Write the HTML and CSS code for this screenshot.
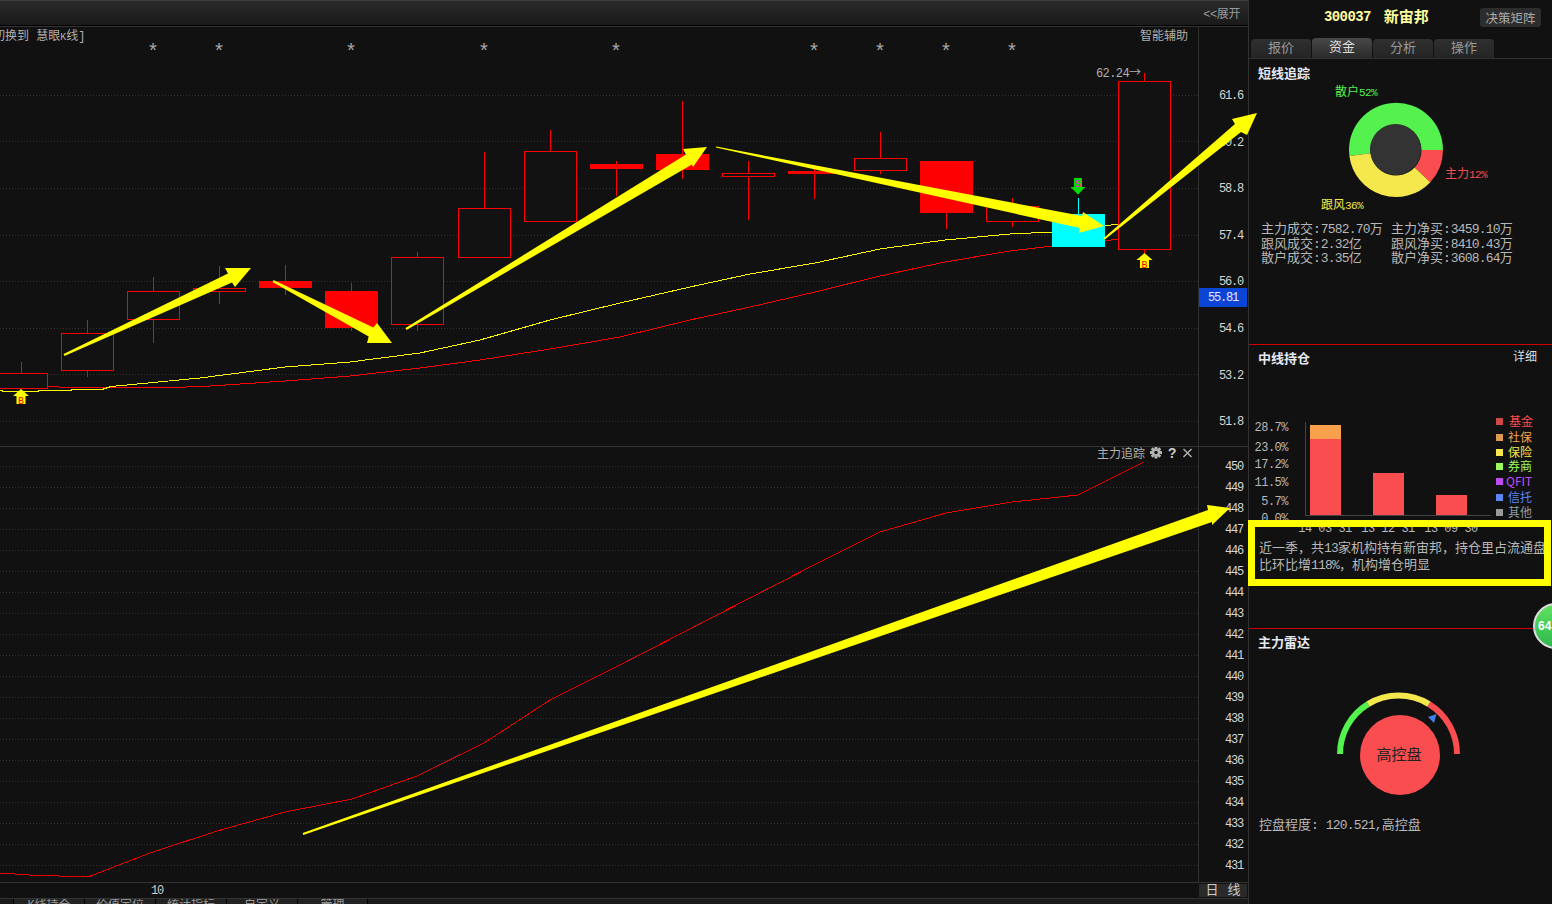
FILE: index.html
```html
<!DOCTYPE html>
<html lang="zh">
<head>
<meta charset="utf-8">
<title>新宙邦 300037</title>
<link rel="stylesheet" href="styles.css">
</head>
<body>
<div class="app">
  <div class="main">
    <div class="topbar"><span class="expand">&lt;&lt;展开</span></div>

    <div class="pane pane-k">
      <svg class="chart" viewBox="0 26 1199 420" width="1199" height="420">
        <g class="grid">
          <path d="M0 95H1199M0 141H1199M0 188H1199M0 235H1199M0 281H1199M0 328H1199M0 374H1199M0 421H1199"/>
        </g>
        <text class="t" x="-7" y="40">切换到 慧眼<tspan class="small-k">K</tspan>线]</text>
        <text class="t" x="1140" y="40">智能辅助</text>
        <g class="t stars" text-anchor="middle">
          <text x="153" y="58">*</text><text x="219" y="58">*</text><text x="351" y="58">*</text>
          <text x="484" y="58">*</text><text x="616" y="58">*</text><text x="814" y="58">*</text>
          <text x="880" y="58">*</text><text x="946" y="58">*</text><text x="1012" y="58">*</text>
        </g>
        <text class="t num-t" x="1096" y="77">62.24<tspan class="arrow-glyph">→</tspan></text>

        <polyline class="ma-r" points="47,386.500 70,387.500 170,387.500 203,386.500 285,381 350,376 420,368 480,360 550,349 620,337 690,320 750,307 815,292 880,276 945,262 1010,251 1052,246 1105,241 1118,239"/>
        <polyline class="ma-y" points="0,390.500 5,391.500 38,391.500 38,390.500 71,390.500 71,389.500 102,389.500 111,386.500 200,378 285,367 350,362 420,353 480,340 550,320 620,303 690,287 750,274 815,263 880,249 945,240 1010,234 1052,232 1105,226 1118,224"/>

        <g class="wick">
          <path d="M21.5 362V373M87.5 320V377M153.5 277V343M219.5 266V304M285.5 265V295M351.5 283V331M417.5 252V331M484.5 152V208M550.5 130V151M616.5 161V196M682.5 101V179M748.5 161V220M814.5 165V199M880.5 132V174M946.5 213V229M1012.5 198V227M1144.5 73V81M1144.5 249V253"/>
        </g>
        <g class="up">
          <rect x="-5" y="373.5" width="52" height="15"/>
          <rect x="61.5" y="333.5" width="52" height="37"/>
          <rect x="127.5" y="291.5" width="52" height="28"/>
          <rect x="193.5" y="288.5" width="52" height="3"/>
          <rect x="391.5" y="257.5" width="52" height="67"/>
          <rect x="458.5" y="208.5" width="52" height="49"/>
          <rect x="524.5" y="151.5" width="52" height="70"/>
          <rect x="722.5" y="173.5" width="52" height="3"/>
          <rect x="854.5" y="158.5" width="52" height="12"/>
          <rect x="986.5" y="206.5" width="52" height="15"/>
          <rect x="1118.5" y="81.5" width="52" height="168"/>
        </g>
        <g class="down">
          <rect x="259" y="281" width="53" height="7"/>
          <rect x="325" y="291" width="53" height="37"/>
          <rect x="590" y="164" width="53" height="5"/>
          <rect x="656" y="154" width="53" height="16"/>
          <rect x="788" y="171" width="53" height="3"/>
          <rect x="920" y="161" width="53" height="52"/>
        </g>
        <path class="cyan-wick" d="M1078.5 198V214"/>
        <rect class="cyan" x="1052" y="214" width="53" height="33"/>

        <g class="mark-b">
          <polygon points="21,389 29,396 25.5,396 25.5,404 16.5,404 16.5,396 13,396"/>
          <text x="21" y="404">B</text>
          <polygon points="1144.5,253 1152.5,260 1149,260 1149,268 1140,268 1140,260 1136.5,260"/>
          <text x="1144.5" y="268">B</text>
        </g>
        <g class="mark-s">
          <polygon points="1074,178 1082,178 1082,187 1085.5,187 1078,194.500 1070.500,187 1074,187"/>
          <text x="1078" y="187">S</text>
        </g>
      </svg>
      <div class="axis axis-k">
        <span>61.6</span><span>60.2</span><span>58.8</span><span>57.4</span>
        <span>56.0</span><span>54.6</span><span>53.2</span><span>51.8</span>
      </div>
      <span class="price-tag">55.81</span>
    </div>

    <div class="pane pane-i">
      <svg class="chart" viewBox="0 447 1199 435" width="1199" height="435">
        <g class="grid">
          <path d="M0 466H1199M0 487H1199M0 508H1199M0 529H1199M0 550H1199M0 571H1199M0 592H1199M0 613H1199M0 634H1199M0 655H1199M0 676H1199M0 697H1199M0 718H1199M0 739H1199M0 760H1199M0 781H1199M0 802H1199M0 823H1199M0 844H1199M0 865H1199"/>
        </g>
        <polyline class="ind" points="0,873 30,875 88,877 150,853 217,831 285,812 352,799 417,776 484,743 550,700 616,667 682,633 748,599 814,565 880,532 946,513 1012,502 1078,495 1144,462"/>
        <text class="t" x="1097" y="458">主力追踪</text>
        <g class="gear" transform="translate(1156 452.500)">
          <circle r="3.600"/>
          <path d="M-1.500 -6H1.500V6H-1.500ZM-6 -1.500V1.500H6V-1.500ZM-5.300 -3.200L-3.200 -5.300L5.300 3.200L3.200 5.300ZM5.300 -3.200L3.200 -5.300L-5.300 3.200L-3.200 5.300Z"/>
          <circle class="gear-hole" r="1.700"/>
        </g>
        <text class="t ctl" x="1168" y="458">?</text>
        <path class="close" d="M1183.500 449L1191.500 457M1191.500 449L1183.500 457"/>
      </svg>
      <div class="axis axis-i">
        <span>450</span><span>449</span><span>448</span><span>447</span><span>446</span>
        <span>445</span><span>444</span><span>443</span><span>442</span><span>441</span>
        <span>440</span><span>439</span><span>438</span><span>437</span><span>436</span>
        <span>435</span><span>434</span><span>433</span><span>432</span><span>431</span>
      </div>
    </div>

    <div class="daterow">
      <span class="date">10</span>
      <span class="period">日 线</span>
    </div>
    <div class="btabs">
      <span>K线持仓</span><span>价值定位</span><span>统计指标</span><span>自定义</span><span>管理</span>
    </div>
  </div>

  <aside class="side">
    <div class="stock">
      <div class="stock-name"><span class="code">300037</span><span>新宙邦</span></div>
      <span class="matrix">决策矩阵</span>
    </div>
    <div class="stabs">
      <span class="stab">报价</span><span class="stab active">资金</span><span class="stab">分析</span><span class="stab">操作</span>
    </div>

    <section class="sec sec-short">
      <h3 class="sec-title">短线追踪</h3>
      <svg class="donut" viewBox="1249 83 303 132" width="303" height="132">
        <path class="c-green" d="M1443 150A47 47 0 1 0 1349.400 155.900L1370.700 153.200A25.500 25.500 0 1 1 1421.500 150Z"/>
        <path class="c-red" d="M1443 150A47 47 0 0 1 1430.300 182.200L1414.600 167.500A25.500 25.500 0 0 0 1421.500 150Z"/>
        <path class="c-yellow" d="M1430.300 182.200A47 47 0 0 1 1349.400 155.900L1370.700 153.200A25.500 25.500 0 0 0 1414.600 167.500Z"/>
        <circle class="c-hole" cx="1395.500" cy="149.500" r="25.500"/>
        <text class="lab l-green" x="1335" y="96">散户<tspan class="lab-n">52%</tspan></text>
        <text class="lab l-red" x="1445" y="178">主力<tspan class="lab-n">12%</tspan></text>
        <text class="lab l-yellow" x="1321" y="209">跟风<tspan class="lab-n">36%</tspan></text>
      </svg>
      <div class="flows">
        <div>主力成交:<span class="n">7582.70</span>万</div><div>主力净买:<span class="n">3459.10</span>万</div>
        <div>跟风成交:<span class="n">2.32</span>亿</div><div>跟风净买:<span class="n">8410.43</span>万</div>
        <div>散户成交:<span class="n">3.35</span>亿</div><div>散户净买:<span class="n">3608.64</span>万</div>
      </div>
    </section>

    <section class="sec sec-mid">
      <div class="sec-head">
        <h3 class="sec-title">中线持仓</h3>
        <span class="detail">详细</span>
      </div>
      <svg class="bars" viewBox="1249 415 303 118" width="303" height="118">
        <g class="ylab" text-anchor="end">
          <text x="1288" y="431">28.7%</text><text x="1288" y="451">23.0%</text><text x="1288" y="468">17.2%</text>
          <text x="1288" y="486">11.5%</text><text x="1288" y="505">5.7%</text><text x="1288" y="522">0.0%</text>
        </g>
        <path class="baxis" d="M1305.500 422V515.500H1491"/>
        <rect class="b-org" x="1310" y="425" width="31" height="14"/>
        <rect class="b-red" x="1310" y="439" width="31" height="76"/>
        <rect class="b-red" x="1373" y="473" width="31" height="42"/>
        <rect class="b-red" x="1436" y="495" width="31" height="20"/>
        <g class="ylab" text-anchor="middle">
          <text x="1325" y="532">14 03 31</text><text x="1388" y="532">13 12 31</text><text x="1451" y="532">13 09 30</text>
        </g>
        <g class="leg">
          <rect x="1496" y="418" width="7" height="7" fill="#d04848"/><text x="1509" y="426" fill="#f94d50">基金</text>
          <rect x="1496" y="434" width="7" height="7" fill="#e09a50"/><text x="1508" y="442" fill="#f9a04d">社保</text>
          <rect x="1496" y="449" width="7" height="7" fill="#f4e84c"/><text x="1508" y="457" fill="#f4e84c">保险</text>
          <rect x="1496" y="463" width="7" height="7" fill="#9af95c"/><text x="1508" y="471" fill="#9af95c">券商</text>
          <rect x="1496" y="478" width="7" height="7" fill="#c04df4"/><text x="1506" y="486" fill="#c04df4">QFIT</text>
          <rect x="1496" y="494" width="7" height="7" fill="#5c86f4"/><text x="1508" y="502" fill="#5c86f4">信托</text>
          <rect x="1496" y="509" width="7" height="7" fill="#999"/><text x="1508" y="517" fill="#999">其他</text>
        </g>
      </svg>
      <p class="note">近一季，共<span class="n">13</span>家机构持有新宙邦，持仓里占流通盘<br>比环比增<span class="n">118%</span>，机构增仓明显</p>
    </section>

    <section class="sec sec-radar">
      <h3 class="sec-title">主力雷达</h3>
      <svg class="gauge" viewBox="1249 670 303 135" width="303" height="135">
        <path class="g-green" d="M1340 754A58.500 58.500 0 0 1 1368 704.100"/>
        <path class="g-yellow" d="M1368 704.100A58.500 58.500 0 0 1 1429 704.100"/>
        <path class="g-red" d="M1429 704.100A58.500 58.500 0 0 1 1457 754"/>
        <circle class="g-core" cx="1400" cy="755" r="40"/>
        <polygon class="g-tip" points="1428,717 1436.500,714 1434,723"/>
        <text class="g-text" x="1399" y="760">高控盘</text>
      </svg>
      <p class="radar-line">控盘程度:<span class="n"> 120.521,</span>高控盘</p>
    </section>
  </aside>

  <div class="highlight"></div>
  <div class="bubble"><span>64</span></div>

  <svg class="arrows" viewBox="0 0 1552 904" width="1552" height="904">
    <polygon points="63.600,354.100 64.400,355.900 232,282.500 235,287 251,268 225,268 228,273.500"/>
    <polygon points="273.500,280.100 272.500,281.900 368.700,336.400 367,343 392,343 377,323 373.300,327.600"/>
    <polygon points="405.500,328.100 406.500,329.900 692,164.500 693,167 707,147 683,149 686,154.500"/>
    <polygon points="716.200,146.500 715.800,147.500 1079.800,228 1079,233 1104,226 1083,212 1082.200,216"/>
    <polygon points="1103.200,238.400 1104.800,239.600 1241,132 1247,135 1257,113 1232,119 1235,124"/>
    <polygon points="302.700,833 303.300,835 1212,522 1212,525 1230,508 1207,505 1208,510"/>
  </svg>
</div>
</body>
</html>
```
FILE: styles.css
```css
* { box-sizing: border-box; }
html, body { margin: 0; padding: 0; height: 100%; background: #111; overflow: hidden; }
body { font-family: "Liberation Mono", "Noto Sans CJK SC", monospace; font-size: 13px; color: #b8b8b8; }

.app { position: relative; display: flex; width: 1552px; height: 904px; overflow: hidden; background: #111; }

/* left column */
.main { flex: 0 0 1248px; display: flex; flex-direction: column; min-width: 0; }
.topbar {
  flex: 0 0 26px; display: flex; align-items: center; justify-content: flex-end;
  padding-right: 8px; border-top: 1px solid #3c3c3c; border-bottom: 1px solid #000;
  background: linear-gradient(#2a2a2a, #1a1a1a); color: #999; font-size: 12px;
  box-shadow: 0 1px 0 #333;
}
.expand { letter-spacing: -.4px; }

.pane { position: relative; display: flex; }
.pane-k { flex: 0 0 421px; border-bottom: 1px solid #333; }
.pane-i { flex: 0 0 435px; }
.chart { display: block; flex: 0 0 1199px; }

.axis {
  flex: 0 0 49px; display: grid; justify-items: end; align-items: center;
  padding-right: 4px; border-left: 1px solid #2e2e2e; margin-left: -1px;
  font-family: "Liberation Mono", monospace; font-size: 12px; letter-spacing: -1.2px; color: #d6d6d6;
}
.axis-k { grid-auto-rows: 46.6px; padding-top: 46.7px; align-content: start; }
.axis-i { grid-auto-rows: 21px; padding-top: 9.5px; align-content: start; }

.price-tag {
  position: absolute; left: 1199px; top: 262px; width: 48px; height: 19px; padding-top: 1px;
  display: flex; align-items: center; justify-content: center;
  background: #0a45d6; color: #e8e8ff;
  font-family: "Liberation Mono", monospace; font-size: 12px; letter-spacing: -1.2px;
}

/* chart drawing */
.grid path { stroke: #333; stroke-width: 1; stroke-dasharray: 1 2; fill: none; shape-rendering: crispEdges; }
.t { font-family: "Liberation Mono", "Noto Sans CJK SC", monospace; font-size: 12px; fill: #b0b0b0; }
.small-k { font-size: 10px; }
.stars { font-size: 20px; fill: #a8a8a8; }
.num-t { letter-spacing: -.6px; }
.arrow-glyph { font-family: "Noto Sans CJK SC", sans-serif; }
.ctl { font-size: 14px; font-weight: 700; fill: #ccc; }
.ma-r, .ma-y, .ind { fill: none; stroke-width: 1; shape-rendering: crispEdges; }
.ma-r { stroke: #f00; }
.ma-y { stroke: #ff0; }
.ind { stroke: #e80000; }
.wick path { stroke: #f00; stroke-width: 1; fill: none; shape-rendering: crispEdges; }
.up rect { fill: #121212; stroke: #f00; stroke-width: 1; shape-rendering: crispEdges; }
.down rect { fill: #f00; shape-rendering: crispEdges; }
.cyan { fill: #0ff; shape-rendering: crispEdges; }
.cyan-wick { stroke: #0ff; stroke-width: 1; shape-rendering: crispEdges; }
.mark-b polygon { fill: #ff0; }
.mark-b text { font-family: "Liberation Mono", monospace; font-size: 10px; fill: #f00; text-anchor: middle; }
.mark-s polygon { fill: #0d0; }
.mark-s text { font-family: "Liberation Mono", monospace; font-size: 11px; fill: #f0f; text-anchor: middle; }
.gear path, .gear circle { fill: #b4b4b4; }
.gear .gear-hole { fill: #111; }
.close { stroke: #b4b4b4; stroke-width: 1.4; fill: none; }

.daterow {
  flex: 0 0 15px; display: flex; align-items: center; justify-content: space-between;
  border-top: 1px solid #333; padding-left: 151px; padding-right: 1px;
}
.date { font-family: "Liberation Mono", monospace; font-size: 12px; letter-spacing: -1.2px; color: #ccc; padding-top: 1px; }
.period {
  width: 48px; height: 13px; line-height: 14px; background: #2a2a2a; color: #ccc;
  font-size: 13px; text-align: center; word-spacing: 1px;
}
.btabs {
  flex: 0 0 20px; display: flex; padding-left: 13px; border-top: 1px solid #333; background: #1a1a1a; overflow: hidden;
}
.btabs span { flex: 0 0 71px; height: 20px; line-height: 14px; border-left: 1px solid #000; text-align: center; font-size: 12px; color: #999; background: #222; }
.btabs span:last-child { border-right: 1px solid #000; }

/* right column */
.side { flex: 0 0 304px; display: flex; flex-direction: column; border-left: 1px solid #333; }
.stock { position: relative; flex: 0 0 37px; display: flex; padding-top: 7px; }
.stock-name {
  display: flex; gap: 13px; margin-left: 75px; height: 18px; align-items: center;
  font-weight: 700; font-size: 15px; color: #ffffa0;
}
.code { font-size: 14px; letter-spacing: -.6px; padding-top: 2px; }
.matrix {
  position: absolute; right: 11px; top: 8px; width: 61px; height: 19px; line-height: 24px; text-align: center; overflow: hidden;
  background: #2d2d2d; border-radius: 3px; color: #aaa; font-size: 12.500px;
}
.stabs { flex: 0 0 22px; display: flex; gap: 1px; padding-left: 2px; padding-top: 2px; border-bottom: 1px solid #333; }
.stab {
  flex: 0 0 60px; height: 19px; line-height: 19px; text-align: center; border-radius: 4px 4px 0 0;
  background: linear-gradient(#303030, #242424); color: #999; font-size: 13px;
}
.stab.active { background: linear-gradient(#484848, #2a2a2a); color: #ddd; margin-top: -1px; height: 20px; }

.sec { position: relative; }
.sec-title { margin: 0; font-size: 13px; line-height: 14px; font-weight: 700; color: #e4e8f0; font-family: "Noto Sans CJK SC", sans-serif; }
.sec-short { flex: 0 0 286px; border-bottom: 1px solid #d00000; padding-top: 7px; }
.sec-short .sec-title { padding-left: 9px; }
.sec-radar .sec-title { padding-left: 9px; }
.donut, .bars, .gauge { display: block; }
.donut { margin-top: 3px; }
.c-green { fill: #55f24f; }
.c-red { fill: #f94d50; }
.c-yellow { fill: #f4e84c; }
.c-hole { fill: #333; }
.lab { font-family: "Noto Sans CJK SC", sans-serif; font-size: 12px; }
.lab-n { font-family: "Liberation Mono", monospace; font-size: 11px; letter-spacing: -.6px; }
.l-green { fill: #55f24f; }
.l-red { fill: #f94d50; }
.l-yellow { fill: #f4e84c; }
.flows { display: grid; grid-template-columns: 130px 1fr; grid-auto-rows: 14.500px; margin-top: 8px; padding-left: 12px; line-height: 14.500px; white-space: nowrap; font-size: 13px; }
.n { font-family: "Liberation Mono", monospace; letter-spacing: -.8px; }

.sec-mid { flex: 0 0 284px; border-bottom: 1px solid #d00000; padding-top: 5px; }
.sec-head { display: flex; justify-content: space-between; height: 65px; padding: 0 15px 0 9px; }
.sec-head .sec-title { padding-top: 1px; }
.detail { font-size: 12px; line-height: 12px; color: #ddd; padding-top: 2px; }
.bars { overflow: hidden; }
.ylab text { font-family: "Liberation Mono", monospace; font-size: 12px; letter-spacing: -.5px; fill: #b8b8b8; }
.baxis { fill: none; stroke: #444; stroke-width: 1; shape-rendering: crispEdges; }
.b-org { fill: #f9a04d; }
.b-red { fill: #f94d50; }
.leg text { font-family: "Noto Sans CJK SC", sans-serif; font-size: 12px; }
.note { margin: 7px 0 0; padding-left: 10px; width: 303px; height: 36px; line-height: 17px; font-size: 13px; white-space: nowrap; overflow: hidden; }

.sec-radar { flex: 1; padding-top: 6px; }
.gauge { margin-top: 21px; }
.g-green, .g-yellow, .g-red { fill: none; stroke-width: 6; }
.g-green { stroke: #55f24f; }
.g-yellow { stroke: #f4e84c; }
.g-red { stroke: #f94d50; }
.g-core { fill: #f94d50; }
.g-tip { fill: #3f7fe8; }
.g-text { font-family: "Noto Sans CJK SC", sans-serif; font-size: 15px; fill: #222; text-anchor: middle; }
.radar-line { margin: 13px 0 0; padding-left: 10px; font-size: 13px; line-height: 16px; }

/* overlays */
.highlight { position: absolute; left: 1248px; top: 520px; width: 303px; height: 66px; border: 7px solid #ff0; }
.bubble {
  position: absolute; left: 1533px; top: 603px; width: 46px; height: 46px; border-radius: 50%;
  border: 2px solid #ddd; background: linear-gradient(#5fe05f, #2eb84e); color: #fff;
  font-family: "Liberation Sans", sans-serif; font-weight: 700; font-size: 12px; line-height: 42px; padding-left: 3px;
}
.arrows { position: absolute; left: 0; top: 0; pointer-events: none; }
.arrows polygon { fill: #ff0; }
```
